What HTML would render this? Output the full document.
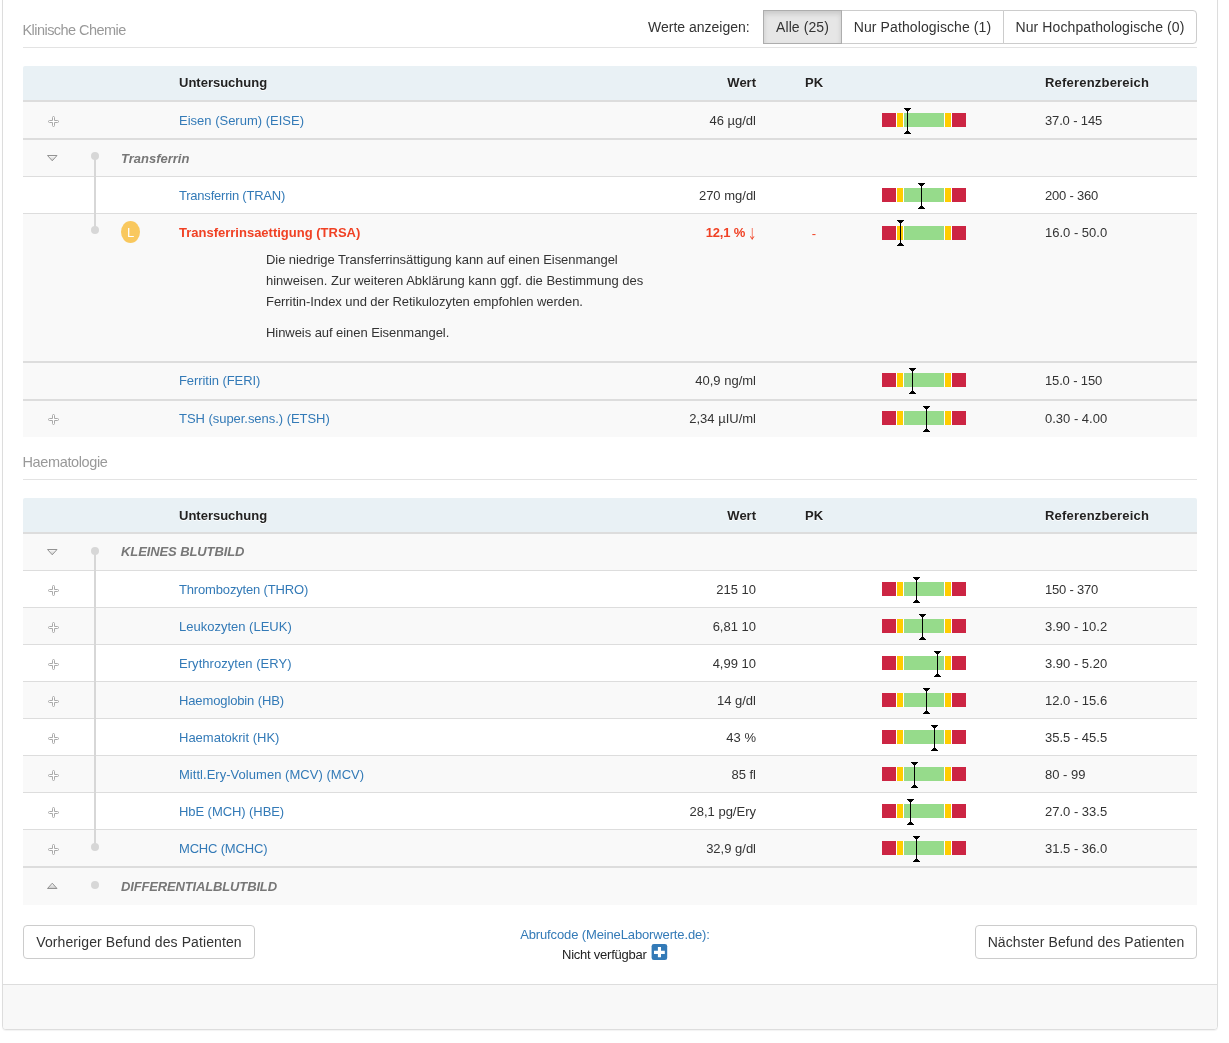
<!DOCTYPE html>
<html lang="de"><head><meta charset="utf-8"><title>Laborbefund</title>
<style>
*{box-sizing:border-box}
html,body{margin:0;padding:0}
body{width:1229px;height:1043px;overflow:hidden;background:#fff;font-family:"Liberation Sans",Arial,sans-serif;font-size:13px;color:#333;position:relative}
.panel{position:absolute;left:2px;top:-10px;width:1216px;height:1040px;border:1px solid #ddd;border-radius:4px;box-shadow:0 1px 1px rgba(0,0,0,.05);background:#fff}
.foot{position:absolute;left:3px;top:984px;width:1214px;height:45px;background:#f8f8f8;border-top:1px solid #ddd;border-radius:0 0 3px 3px}
.h{position:absolute;left:22.5px;font-size:14.5px;color:#999;line-height:20px;white-space:nowrap}
.hr{position:absolute;left:23px;width:1174px;height:1px;background:#e3e3e3}
.th{position:absolute;left:23px;width:1174px;height:34px;background:#e9f1f5;border-radius:2px 2px 0 0;font-weight:bold;color:#222;line-height:34px}
.th span{position:absolute;top:0;white-space:nowrap;text-shadow:0 1px 0 rgba(255,255,255,.9)}
.bd{position:absolute;left:23px;width:1174px;background:#ddd}
.rw{position:absolute;left:23px;width:1174px;line-height:36px}
.rw span{position:absolute;top:1px;white-space:nowrap}
.rw.up span{top:0}
.rw span.ar{position:relative;top:1px;display:inline-block;width:7.5px;text-indent:-3.6px;line-height:0;font-family:"Noto Sans CJK SC",sans-serif;font-weight:normal;text-align:left;transform:scaleX(.72);transform-origin:4px 50%}
.nm{left:156px;color:#337ab7}
.gt{left:98px;color:#777;font-weight:bold;font-style:italic}
.vl{right:441px;text-align:right}
.pk{left:771px;width:40px;text-align:center}
.rf{left:1022px}
.p{color:#f04124 !important;font-weight:bold}
.vl.p{letter-spacing:-.2px}
.ic{position:absolute;display:block}
.bar{position:absolute;left:882px;width:84px;height:14px;background:#fff}
.bar i{position:absolute;top:0;height:14px;display:block}
.bar .r{left:0;width:14px;background:#cc2543}
.bar .y{width:6px;background:#ffcc00}
.bar .g{left:22px;width:40px;background:#96db8b}
.mk{position:absolute;display:block}
.dot{position:absolute;left:91px;width:8px;height:8px;border-radius:50%;background:#d7d7d7}
.ln{position:absolute;left:94px;width:2px;background:#d7d7d7}
.btn{position:absolute;height:34px;border:1px solid #ccc;background:#fff;color:#333;font-size:14px;line-height:32px;text-align:center;white-space:nowrap;border-radius:4px;letter-spacing:.1px}
.desc{position:absolute;left:243px;top:35px;width:420px;line-height:21px;color:#333;white-space:normal}
.desc p{margin:0 0 10px}
.rw .desc span{position:static}
</style></head><body>
<div id="wrap" style="position:absolute;left:0;top:0;width:1229px;height:1043px;will-change:transform">
<svg width="0" height="0" style="position:absolute"><defs><linearGradient id="gd" x1="0" y1="0" x2="0" y2="1"><stop offset="0" stop-color="#fff"/><stop offset="1" stop-color="#c8c8c8"/></linearGradient></defs></svg>
<div class="panel"></div>
<div class="foot"></div>

<div class="h" style="top:20px;letter-spacing:-.55px">Klinische Chemie</div>
<div class="hr" style="top:47px"></div>
<div style="position:absolute;left:648px;top:10px;line-height:34px;font-size:14px;color:#333;white-space:nowrap">Werte anzeigen:</div>
<div class="btn" style="left:763px;top:10px;width:79px;border-radius:0;background:#e6e6e6;border-color:#adadad;box-shadow:inset 0 3px 5px rgba(0,0,0,.125);z-index:2">Alle (25)</div>
<div class="btn" style="left:841px;top:10px;width:163px;border-radius:0">Nur Pathologische (1)</div>
<div class="btn" style="left:1003px;top:10px;width:194px;border-radius:0 4px 4px 0">Nur Hochpathologische (0)</div>
<div class="th" style="top:66px;line-height:34px"><span style="left:156px">Untersuchung</span><span style="right:441px">Wert</span><span style="left:771px;width:40px;text-align:center">PK</span><span style="left:1022px;letter-spacing:.2px">Referenzbereich</span></div>
<div class="bd" style="top:100px;height:2px"></div><div class="rw" style="top:102px;height:36px;background:#f9f9f9"><span class="nm">Eisen (Serum) (EISE)</span><span class="vl">46 µg/dl</span><span class="rf" style="letter-spacing:-0.15px">37.0 - 145</span></div><svg class="ic" style="left:48px;top:116px" width="11" height="11" viewBox="0 0 11 11"><path d="M4.5 1.5a1 1 0 0 1 2 0V4.5H9.5a1 1 0 0 1 0 2H6.5V9.5a1 1 0 0 1-2 0V6.5H1.5a1 1 0 0 1 0-2H4.5Z" fill="#fff" stroke="#a9a9a9" stroke-width="1"/></svg><div class="bar" style="top:113px"><i class="r"></i><i class="y" style="left:15px"></i><i class="g"></i><i class="y" style="left:63px"></i><i class="r" style="left:70px"></i></div><svg class="mk" style="left:904px;top:108px" width="7" height="26" viewBox="0 0 7 26"><path d="M0 0H7V1H6V2H5V3H4V23H5V24H6V25H7V26H0V25H1V24H2V23H3V3H2V2H1V1H0Z" fill="#000"/></svg>
<div class="bd" style="top:138px;height:2px"></div><div class="rw" style="top:140px;height:36px;background:#f9f9f9"><span class="gt">Transferrin</span></div>
<svg class="ic" style="left:47px;top:155px" width="11" height="7" viewBox="0 0 11 7"><path d="M0.5 0.5H10L5.25 5.8Z" fill="url(#gd)" stroke="#939393" stroke-width="1" stroke-linejoin="round"/></svg>
<div class="bd" style="top:176px;height:1px"></div><div class="rw" style="top:177px;height:36px;background:#fff"><span class="nm" style="letter-spacing:-0.22px">Transferrin (TRAN)</span><span class="vl">270 mg/dl</span><span class="rf" style="letter-spacing:-0.2px">200 - 360</span></div><div class="bar" style="top:188px"><i class="r"></i><i class="y" style="left:15px"></i><i class="g"></i><i class="y" style="left:63px"></i><i class="r" style="left:70px"></i></div><svg class="mk" style="left:918px;top:183px" width="7" height="26" viewBox="0 0 7 26"><path d="M0 0H7V1H6V2H5V3H4V23H5V24H6V25H7V26H0V25H1V24H2V23H3V3H2V2H1V1H0Z" fill="#000"/></svg>
<div class="bd" style="top:213px;height:1px"></div><div class="rw" style="top:214px;height:147px;background:#f9f9f9"><span class="nm p">Transferrinsaettigung (TRSA)</span><span class="vl p">12,1 % <span class="ar">↓</span></span><span class="pk" style="color:#f04124;top:2px">-</span><span class="rf">16.0 - 50.0</span><div class="desc"><p><span class="l" style="letter-spacing:-.065px">Die niedrige Transferrinsättigung kann auf einen Eisenmangel</span><br><span class="l">hinweisen. Zur weiteren Abklärung kann ggf. die Bestimmung des</span><br><span class="l" style="letter-spacing:-.06px">Ferritin-Index und der Retikulozyten empfohlen werden.</span></p><p style="letter-spacing:-.06px">Hinweis auf einen Eisenmangel.</p></div></div><div class="bar" style="top:226px"><i class="r"></i><i class="y" style="left:15px"></i><i class="g"></i><i class="y" style="left:63px"></i><i class="r" style="left:70px"></i></div><svg class="mk" style="left:897px;top:220px" width="7" height="26" viewBox="0 0 7 26"><path d="M0 0H7V1H6V2H5V3H4V23H5V24H6V25H7V26H0V25H1V24H2V23H3V3H2V2H1V1H0Z" fill="#000"/></svg>
<div class="ln" style="top:156px;height:74px"></div><div class="dot" style="top:152px"></div><div class="dot" style="top:226px"></div>
<div style="position:absolute;left:121px;top:221px;width:19px;height:22px;border-radius:50%;background:#f9c85e;color:#fff;font-size:13px;line-height:24px;text-align:center">L</div>
<div class="bd" style="top:361px;height:2px"></div><div class="rw up" style="top:363px;height:36px;background:#f9f9f9"><span class="nm" style="letter-spacing:-0.07px">Ferritin (FERI)</span><span class="vl">40,9 ng/ml</span><span class="rf" style="letter-spacing:-0.15px">15.0 - 150</span></div><div class="bar" style="top:373px"><i class="r"></i><i class="y" style="left:15px"></i><i class="g"></i><i class="y" style="left:63px"></i><i class="r" style="left:70px"></i></div><svg class="mk" style="left:909px;top:368px" width="7" height="26" viewBox="0 0 7 26"><path d="M0 0H7V1H6V2H5V3H4V23H5V24H6V25H7V26H0V25H1V24H2V23H3V3H2V2H1V1H0Z" fill="#000"/></svg>
<div class="bd" style="top:399px;height:2px"></div><div class="rw up" style="top:401px;height:36px;background:#f9f9f9"><span class="nm" style="letter-spacing:-0.04px">TSH (super.sens.) (ETSH)</span><span class="vl">2,34 µIU/ml</span><span class="rf">0.30 - 4.00</span></div><svg class="ic" style="left:48px;top:414px" width="11" height="11" viewBox="0 0 11 11"><path d="M4.5 1.5a1 1 0 0 1 2 0V4.5H9.5a1 1 0 0 1 0 2H6.5V9.5a1 1 0 0 1-2 0V6.5H1.5a1 1 0 0 1 0-2H4.5Z" fill="#fff" stroke="#a9a9a9" stroke-width="1"/></svg><div class="bar" style="top:411px"><i class="r"></i><i class="y" style="left:15px"></i><i class="g"></i><i class="y" style="left:63px"></i><i class="r" style="left:70px"></i></div><svg class="mk" style="left:923px;top:406px" width="7" height="26" viewBox="0 0 7 26"><path d="M0 0H7V1H6V2H5V3H4V23H5V24H6V25H7V26H0V25H1V24H2V23H3V3H2V2H1V1H0Z" fill="#000"/></svg>
<div class="h" style="top:452px;letter-spacing:-.37px">Haematologie</div>
<div class="hr" style="top:479px"></div>
<div class="th" style="top:498px;line-height:36px"><span style="left:156px">Untersuchung</span><span style="right:441px">Wert</span><span style="left:771px;width:40px;text-align:center">PK</span><span style="left:1022px;letter-spacing:.2px">Referenzbereich</span></div>
<div class="bd" style="top:532px;height:2px"></div><div class="rw up" style="top:534px;height:36px;background:#f9f9f9"><span class="gt" style="letter-spacing:-.1px">KLEINES BLUTBILD</span></div>
<svg class="ic" style="left:47px;top:549px" width="11" height="7" viewBox="0 0 11 7"><path d="M0.5 0.5H10L5.25 5.8Z" fill="url(#gd)" stroke="#939393" stroke-width="1" stroke-linejoin="round"/></svg>
<div class="bd" style="top:570px;height:1px"></div><div class="rw" style="top:571px;height:36px;background:#fff"><span class="nm" style="letter-spacing:-0.16px">Thrombozyten (THRO)</span><span class="vl">215 10</span><span class="rf" style="letter-spacing:-0.2px">150 - 370</span></div><svg class="ic" style="left:48px;top:585px" width="11" height="11" viewBox="0 0 11 11"><path d="M4.5 1.5a1 1 0 0 1 2 0V4.5H9.5a1 1 0 0 1 0 2H6.5V9.5a1 1 0 0 1-2 0V6.5H1.5a1 1 0 0 1 0-2H4.5Z" fill="#fff" stroke="#a9a9a9" stroke-width="1"/></svg><div class="bar" style="top:582px"><i class="r"></i><i class="y" style="left:15px"></i><i class="g"></i><i class="y" style="left:63px"></i><i class="r" style="left:70px"></i></div><svg class="mk" style="left:913px;top:577px" width="7" height="26" viewBox="0 0 7 26"><path d="M0 0H7V1H6V2H5V3H4V23H5V24H6V25H7V26H0V25H1V24H2V23H3V3H2V2H1V1H0Z" fill="#000"/></svg>
<div class="bd" style="top:607px;height:1px"></div><div class="rw" style="top:608px;height:36px;background:#f9f9f9"><span class="nm">Leukozyten (LEUK)</span><span class="vl">6,81 10</span><span class="rf">3.90 - 10.2</span></div><svg class="ic" style="left:48px;top:622px" width="11" height="11" viewBox="0 0 11 11"><path d="M4.5 1.5a1 1 0 0 1 2 0V4.5H9.5a1 1 0 0 1 0 2H6.5V9.5a1 1 0 0 1-2 0V6.5H1.5a1 1 0 0 1 0-2H4.5Z" fill="#fff" stroke="#a9a9a9" stroke-width="1"/></svg><div class="bar" style="top:619px"><i class="r"></i><i class="y" style="left:15px"></i><i class="g"></i><i class="y" style="left:63px"></i><i class="r" style="left:70px"></i></div><svg class="mk" style="left:919px;top:614px" width="7" height="26" viewBox="0 0 7 26"><path d="M0 0H7V1H6V2H5V3H4V23H5V24H6V25H7V26H0V25H1V24H2V23H3V3H2V2H1V1H0Z" fill="#000"/></svg>
<div class="bd" style="top:644px;height:1px"></div><div class="rw" style="top:645px;height:36px;background:#fff"><span class="nm" style="letter-spacing:0.05px">Erythrozyten (ERY)</span><span class="vl">4,99 10</span><span class="rf">3.90 - 5.20</span></div><svg class="ic" style="left:48px;top:659px" width="11" height="11" viewBox="0 0 11 11"><path d="M4.5 1.5a1 1 0 0 1 2 0V4.5H9.5a1 1 0 0 1 0 2H6.5V9.5a1 1 0 0 1-2 0V6.5H1.5a1 1 0 0 1 0-2H4.5Z" fill="#fff" stroke="#a9a9a9" stroke-width="1"/></svg><div class="bar" style="top:656px"><i class="r"></i><i class="y" style="left:15px"></i><i class="g"></i><i class="y" style="left:63px"></i><i class="r" style="left:70px"></i></div><svg class="mk" style="left:934px;top:651px" width="7" height="26" viewBox="0 0 7 26"><path d="M0 0H7V1H6V2H5V3H4V23H5V24H6V25H7V26H0V25H1V24H2V23H3V3H2V2H1V1H0Z" fill="#000"/></svg>
<div class="bd" style="top:681px;height:1px"></div><div class="rw" style="top:682px;height:36px;background:#f9f9f9"><span class="nm" style="letter-spacing:-0.125px">Haemoglobin (HB)</span><span class="vl">14 g/dl</span><span class="rf">12.0 - 15.6</span></div><svg class="ic" style="left:48px;top:696px" width="11" height="11" viewBox="0 0 11 11"><path d="M4.5 1.5a1 1 0 0 1 2 0V4.5H9.5a1 1 0 0 1 0 2H6.5V9.5a1 1 0 0 1-2 0V6.5H1.5a1 1 0 0 1 0-2H4.5Z" fill="#fff" stroke="#a9a9a9" stroke-width="1"/></svg><div class="bar" style="top:693px"><i class="r"></i><i class="y" style="left:15px"></i><i class="g"></i><i class="y" style="left:63px"></i><i class="r" style="left:70px"></i></div><svg class="mk" style="left:923px;top:688px" width="7" height="26" viewBox="0 0 7 26"><path d="M0 0H7V1H6V2H5V3H4V23H5V24H6V25H7V26H0V25H1V24H2V23H3V3H2V2H1V1H0Z" fill="#000"/></svg>
<div class="bd" style="top:718px;height:1px"></div><div class="rw" style="top:719px;height:36px;background:#fff"><span class="nm">Haematokrit (HK)</span><span class="vl">43 %</span><span class="rf">35.5 - 45.5</span></div><svg class="ic" style="left:48px;top:733px" width="11" height="11" viewBox="0 0 11 11"><path d="M4.5 1.5a1 1 0 0 1 2 0V4.5H9.5a1 1 0 0 1 0 2H6.5V9.5a1 1 0 0 1-2 0V6.5H1.5a1 1 0 0 1 0-2H4.5Z" fill="#fff" stroke="#a9a9a9" stroke-width="1"/></svg><div class="bar" style="top:730px"><i class="r"></i><i class="y" style="left:15px"></i><i class="g"></i><i class="y" style="left:63px"></i><i class="r" style="left:70px"></i></div><svg class="mk" style="left:931px;top:725px" width="7" height="26" viewBox="0 0 7 26"><path d="M0 0H7V1H6V2H5V3H4V23H5V24H6V25H7V26H0V25H1V24H2V23H3V3H2V2H1V1H0Z" fill="#000"/></svg>
<div class="bd" style="top:755px;height:1px"></div><div class="rw" style="top:756px;height:36px;background:#f9f9f9"><span class="nm" style="letter-spacing:0.035px">Mittl.Ery-Volumen (MCV) (MCV)</span><span class="vl">85 fl</span><span class="rf">80 - 99</span></div><svg class="ic" style="left:48px;top:770px" width="11" height="11" viewBox="0 0 11 11"><path d="M4.5 1.5a1 1 0 0 1 2 0V4.5H9.5a1 1 0 0 1 0 2H6.5V9.5a1 1 0 0 1-2 0V6.5H1.5a1 1 0 0 1 0-2H4.5Z" fill="#fff" stroke="#a9a9a9" stroke-width="1"/></svg><div class="bar" style="top:767px"><i class="r"></i><i class="y" style="left:15px"></i><i class="g"></i><i class="y" style="left:63px"></i><i class="r" style="left:70px"></i></div><svg class="mk" style="left:911px;top:762px" width="7" height="26" viewBox="0 0 7 26"><path d="M0 0H7V1H6V2H5V3H4V23H5V24H6V25H7V26H0V25H1V24H2V23H3V3H2V2H1V1H0Z" fill="#000"/></svg>
<div class="bd" style="top:792px;height:1px"></div><div class="rw" style="top:793px;height:36px;background:#fff"><span class="nm" style="letter-spacing:-0.07px">HbE (MCH) (HBE)</span><span class="vl">28,1 pg/Ery</span><span class="rf">27.0 - 33.5</span></div><svg class="ic" style="left:48px;top:807px" width="11" height="11" viewBox="0 0 11 11"><path d="M4.5 1.5a1 1 0 0 1 2 0V4.5H9.5a1 1 0 0 1 0 2H6.5V9.5a1 1 0 0 1-2 0V6.5H1.5a1 1 0 0 1 0-2H4.5Z" fill="#fff" stroke="#a9a9a9" stroke-width="1"/></svg><div class="bar" style="top:804px"><i class="r"></i><i class="y" style="left:15px"></i><i class="g"></i><i class="y" style="left:63px"></i><i class="r" style="left:70px"></i></div><svg class="mk" style="left:907px;top:799px" width="7" height="26" viewBox="0 0 7 26"><path d="M0 0H7V1H6V2H5V3H4V23H5V24H6V25H7V26H0V25H1V24H2V23H3V3H2V2H1V1H0Z" fill="#000"/></svg>
<div class="bd" style="top:829px;height:1px"></div><div class="rw" style="top:830px;height:36px;background:#f9f9f9"><span class="nm" style="letter-spacing:-0.18px">MCHC (MCHC)</span><span class="vl">32,9 g/dl</span><span class="rf">31.5 - 36.0</span></div><svg class="ic" style="left:48px;top:844px" width="11" height="11" viewBox="0 0 11 11"><path d="M4.5 1.5a1 1 0 0 1 2 0V4.5H9.5a1 1 0 0 1 0 2H6.5V9.5a1 1 0 0 1-2 0V6.5H1.5a1 1 0 0 1 0-2H4.5Z" fill="#fff" stroke="#a9a9a9" stroke-width="1"/></svg><div class="bar" style="top:841px"><i class="r"></i><i class="y" style="left:15px"></i><i class="g"></i><i class="y" style="left:63px"></i><i class="r" style="left:70px"></i></div><svg class="mk" style="left:913px;top:836px" width="7" height="26" viewBox="0 0 7 26"><path d="M0 0H7V1H6V2H5V3H4V23H5V24H6V25H7V26H0V25H1V24H2V23H3V3H2V2H1V1H0Z" fill="#000"/></svg>
<div class="bd" style="top:866px;height:2px"></div><div class="rw" style="top:868px;height:37px;background:#f9f9f9"><span class="gt" style="letter-spacing:-.15px">DIFFERENTIALBLUTBILD</span></div>
<svg class="ic" style="left:47px;top:882px" width="11" height="7" viewBox="0 0 11 7"><path d="M0.5 6.5H10L5.25 1.2Z" fill="url(#gd)" stroke="#939393" stroke-width="1" stroke-linejoin="round"/></svg>
<div class="ln" style="top:551px;height:296px"></div><div class="dot" style="top:547px"></div><div class="dot" style="top:843px"></div><div class="dot" style="top:881px"></div>
<div class="btn" style="left:23px;top:925px;width:232px">Vorheriger Befund des Patienten</div>
<div class="btn" style="left:975px;top:925px;width:222px">Nächster Befund des Patienten</div>
<div style="position:absolute;left:415px;top:925px;width:400px;text-align:center;line-height:20px;white-space:nowrap"><span style="color:#337ab7;letter-spacing:-.13px">Abrufcode (MeineLaborwerte.de):</span></div>
<div style="position:absolute;left:562px;top:945px;line-height:20px;white-space:nowrap;color:#222;letter-spacing:-.23px">Nicht verfügbar</div>
<svg class="ic" style="left:651px;top:944px" width="17" height="17" viewBox="0 0 17 17"><rect x="0.6" y="0" width="15.6" height="16.1" rx="2.3" fill="#337ab7"/><path d="M6.9 3h3.1v3.7h3.8V10H10v3.2H6.9V10H3V6.7h3.9z" fill="#fff"/></svg>
</div></body></html>
